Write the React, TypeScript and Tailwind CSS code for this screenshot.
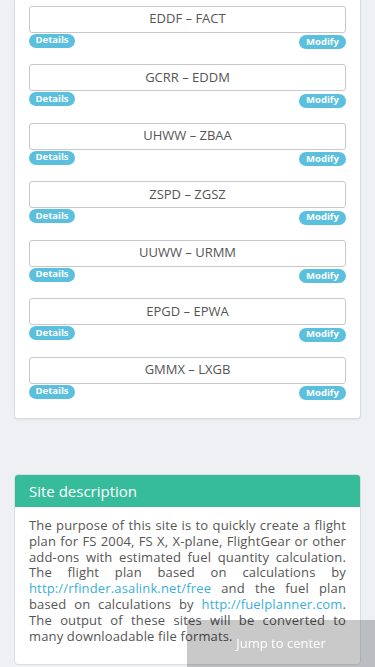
import React from "react";

const routes = [
  "EDDF – FACT",
  "GCRR – EDDM",
  "UHWW – ZBAA",
  "ZSPD – ZGSZ",
  "UUWW – URMM",
  "EPGD – EPWA",
  "GMMX – LXGB",
];

function Row({ name }: { name: string }) {
  return (
    <div className="h-[58.5px]">
      <div className="h-[27px] border border-[#c8c8cc] rounded-[3px] flex items-center justify-center text-[13px] text-[#555] bg-white">
        {name}
      </div>
      <div className="flex justify-between items-start mt-[1px]">
        <span className="h-[14px] w-[46px] rounded-full bg-[#5bc0de] text-white text-[9.5px] font-bold flex items-center justify-center">
          Details
        </span>
        <span className="h-[14px] w-[47px] mt-[1.5px] rounded-full bg-[#5bc0de] text-white text-[9.5px] font-bold flex items-center justify-center">
          Modify
        </span>
      </div>
    </div>
  );
}

export default function App() {
  return (
    <div className="min-h-screen bg-[#eff0f4] font-['Open_Sans',sans-serif] px-[14px] pb-[40px]">
      <div className="bg-white border border-t-0 border-[#dcdde1] rounded-b-[4px] shadow-[0_1px_2px_rgba(0,0,0,0.06)] px-[14px] pt-[5.5px] pb-[3px]">
        {routes.map((r) => (
          <Row key={r} name={r} />
        ))}
      </div>

      <div className="mt-[55px] bg-white border border-[#dcdde1] rounded-[4px] overflow-hidden">
        <div className="h-[32px] bg-[#37bc9b] text-white text-[15px] flex items-center px-[14px]">
          Site description
        </div>
        <p className="px-[14px] pt-[11px] pb-[20px] text-[13px] tracking-[0.15px] leading-[15.8px] text-[#555] text-justify">
          The purpose of this site is to quickly create a flight plan for FS 2004, FS X, X-plane, FlightGear or other
          add-ons with estimated fuel quantity calculation. The flight plan based on calculations by{" "}
          <a className="text-[#3bafda]">http://rfinder.asalink.net/free</a> and the fuel plan based on calculations by{" "}
          <a className="text-[#3bafda]">http://fuelplanner.com</a>. The output of these sites will be converted to many
          downloadable file formats.
        </p>
      </div>

      <div className="fixed right-0 bottom-0 w-[188px] h-[47px] bg-[rgba(0,0,0,0.21)] text-white text-[13px] flex items-center justify-center">
        Jump to center
      </div>
    </div>
  );
}
